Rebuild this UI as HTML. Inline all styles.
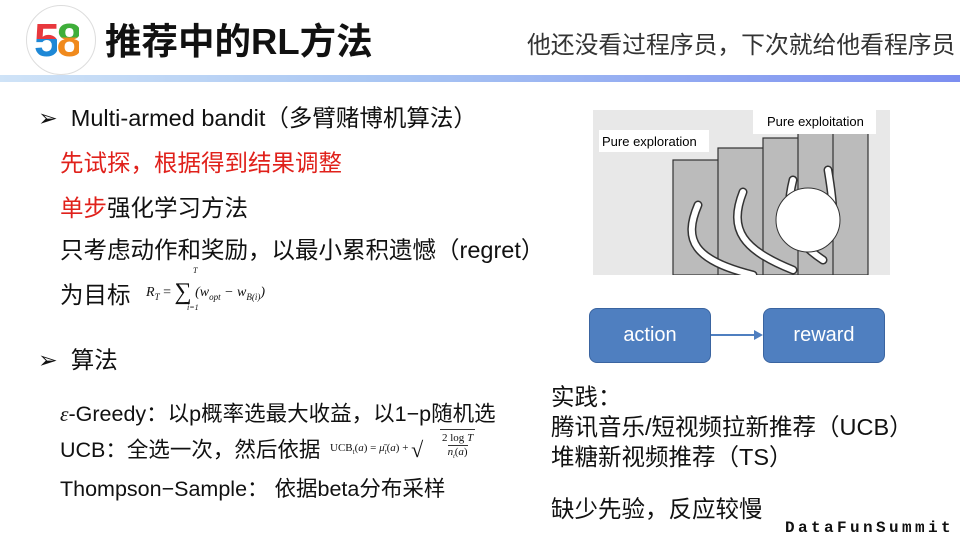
<!DOCTYPE html>
<html><head><meta charset="utf-8"><style>
body{margin:0;width:960px;height:540px;background:#fff;position:relative;overflow:hidden;font-family:"Liberation Sans","Noto Sans CJK SC",sans-serif;color:#111}
.a{position:absolute;white-space:nowrap}
.m{font-family:"Liberation Serif",serif;font-style:italic}
.red{color:#e0211b}
.g{-webkit-background-clip:text;background-clip:text;color:transparent}
</style></head><body>
<div class="a" style="left:26px;top:5px;width:68px;height:68px;border-radius:50%;border:1px solid #ddd"></div>
<div class="a" style="left:34px;top:14px;font:bold 46px 'Liberation Sans',sans-serif;letter-spacing:-3px;line-height:52px"><span class="g" style="background-image:linear-gradient(180deg,#e8383d 48%,#1e88d6 48%)">5</span><span class="g" style="background-image:linear-gradient(180deg,#3fae3a 45%,#f08a1d 45%)">8</span></div>
<div class="a" style="left:105px;top:19px;font-weight:bold;font-size:36.5px;line-height:46px">推荐中的RL方法</div>
<div class="a" style="left:527px;top:25px;font-size:23.8px;color:#333">他还没看过程序员，下次就给他看程序员</div>
<div class="a" style="left:0;top:75px;width:960px;height:7px;background:linear-gradient(90deg,#cfe3f7,#a9c6f3 40%,#7c8ef0)"></div>

<div class="a" style="left:38px;top:99px;font-size:23.5px">➢&nbsp; Multi-armed bandit（多臂赌博机算法）</div>
<div class="a red" style="left:60px;top:144px;font-size:23.5px">先试探，根据得到结果调整</div>
<div class="a" style="left:60px;top:189px;font-size:23.5px"><span class="red">单步</span>强化学习方法</div>
<div class="a" style="left:60px;top:231px;font-size:23.5px">只考虑动作和奖励，以最小累积遗憾（regret）</div>
<div class="a" style="left:60px;top:276px;font-size:23.5px">为目标</div>
<div class="a m" style="left:146px;top:279px;font-size:14px">R<sub style="font-size:9px">T</sub> <span style="font-style:normal">=</span> <span style="font-style:normal;font-size:24px;vertical-align:-3px">∑</span> (w<sub style="font-size:9px">opt</sub> − w<sub style="font-size:9px">B(i)</sub>)</div>
<div class="a m" style="left:193px;top:266px;font-size:8px">T</div>
<div class="a m" style="left:187px;top:303px;font-size:8px">i=1</div>
<div class="a" style="left:38px;top:341px;font-size:23.5px">➢&nbsp; 算法</div>
<div class="a" style="left:60px;top:397px;font-size:21.5px"><span class="m">ε</span>-Greedy：以p概率选最大收益，以1−p随机选</div>
<div class="a" style="left:60px;top:433px;font-size:21.5px">UCB：全选一次，然后依据</div>
<div class="a" style="left:330px;top:437px;font-family:'Liberation Serif',serif;font-size:11px">UCB<sub style="font-size:7px">t</sub>(<i>a</i>) = <i>μ̄<sub style="font-size:7px">t</sub></i>(<i>a</i>) + <span style="font-size:22px;vertical-align:-6px">√</span></div>
<div class="a" style="left:440px;top:429px;font-family:'Liberation Serif',serif;font-size:11px;text-align:center;border-top:1px solid #333;padding:1px 2px;line-height:14px">2 log <i>T</i><br><span style="border-top:1px solid #333"><i>n<sub style="font-size:6px">t</sub></i>(<i>a</i>)</span></div>
<div class="a" style="left:60px;top:472px;font-size:21.5px">Thompson−Sample： 依据beta分布采样</div>

<svg class="a" style="left:593px;top:110px" width="297" height="165" viewBox="0 0 297 165">
<rect x="0" y="0" width="297" height="165" fill="#e8e8e8"/>
<g fill="#bbb" stroke="#333" stroke-width="1.2">
<rect x="80" y="50" width="55" height="115"/><rect x="125" y="38" width="55" height="127"/><rect x="170" y="28" width="45" height="137"/><rect x="205" y="20" width="40" height="145"/><rect x="240" y="12" width="35" height="153"/></g>
<g fill="none" stroke="#333" stroke-width="9" stroke-linecap="round"><path d="M105 95 C90 130,100 150,160 165"/><path d="M150 82 C135 120,150 140,200 160"/><path d="M200 70 C190 110,200 130,230 150"/><path d="M235 60 C240 90,240 100,240 110"/></g>
<g fill="none" stroke="#fff" stroke-width="6" stroke-linecap="round"><path d="M105 95 C90 130,100 150,160 165"/><path d="M150 82 C135 120,150 140,200 160"/><path d="M200 70 C190 110,200 130,230 150"/><path d="M235 60 C240 90,240 100,240 110"/></g>
<circle cx="215" cy="110" r="32" fill="#fff" stroke="#333"/>
<rect x="6" y="20" width="110" height="22" fill="#fff"/><text x="9" y="36" font-size="13" font-family="Liberation Sans">Pure exploration</text>
<rect x="160" y="0" width="123" height="24" fill="#fff"/><text x="174" y="16" font-size="13" font-family="Liberation Sans">Pure exploitation</text>
</svg>

<div class="a" style="left:589px;top:308px;width:120px;height:53px;background:#4f7fc0;border:1px solid #3a64a0;border-radius:8px;color:#fff;font-size:20px;text-align:center;line-height:53px">action</div>
<div class="a" style="left:763px;top:308px;width:120px;height:53px;background:#4f7fc0;border:1px solid #3a64a0;border-radius:8px;color:#fff;font-size:20px;text-align:center;line-height:53px">reward</div>
<div class="a" style="left:711px;top:334px;width:44px;height:2px;background:#4f7fc0"></div>
<div class="a" style="left:754px;top:330px;border-left:9px solid #4f7fc0;border-top:5px solid transparent;border-bottom:5px solid transparent"></div>

<div class="a" style="left:551px;top:382px;font-size:23.5px;line-height:30px">实践：<br>腾讯音乐/短视频拉新推荐（UCB）<br>堆糖新视频推荐（TS）</div>
<div class="a" style="left:551px;top:490px;font-size:23.5px">缺少先验，反应较慢</div>
<div class="a" style="left:785px;top:519px;font-weight:bold;font-size:16px;letter-spacing:3.4px;font-family:'Liberation Mono',monospace">DataFunSummit</div>
</body></html>
